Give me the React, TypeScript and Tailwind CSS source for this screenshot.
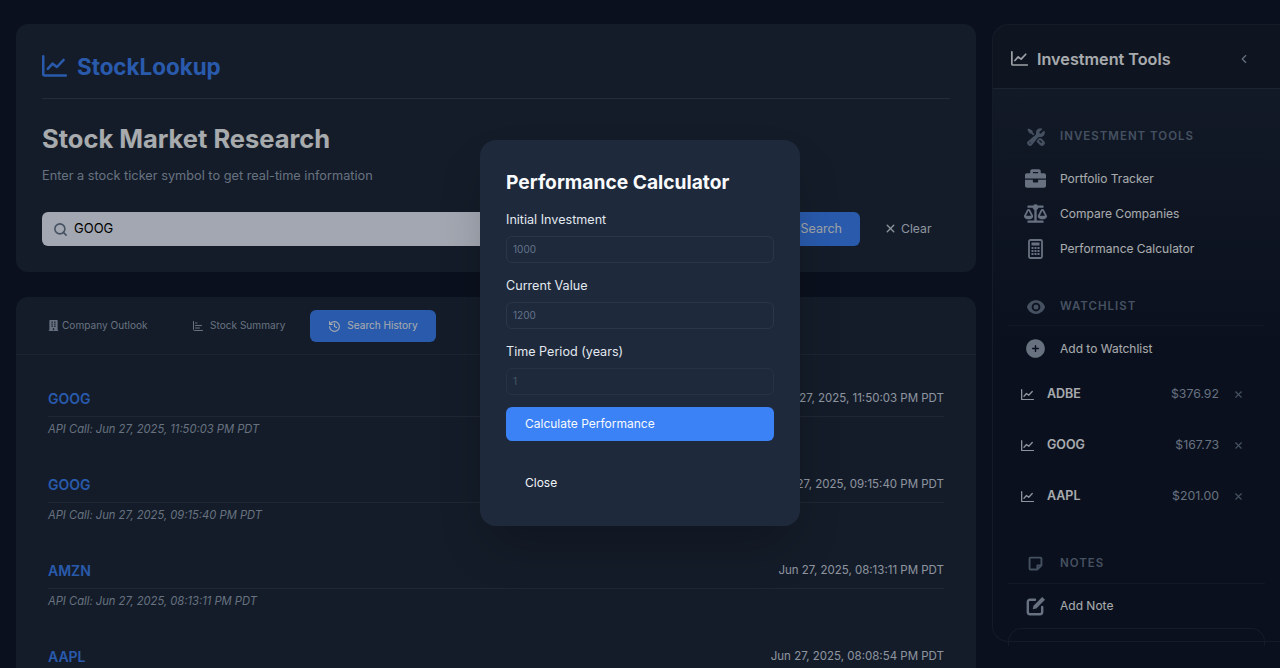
import React from "react";
import { ChevronLeft, ChartBar, History, Search, X } from "lucide-react";
import { HiWrenchScrewdriver, HiEye, HiPlusCircle } from "react-icons/hi2";
import { FaBuilding, FaBriefcase, FaBalanceScale } from "react-icons/fa";

const font = { fontFamily: "Inter, 'Liberation Sans', sans-serif" };

function ChartIcon({ w, className }: { w: number; className?: string }) {
  return (
    <svg width={w} height={(w * 23) / 26} viewBox="0 0 26 23" fill="none" stroke="currentColor" strokeWidth="2.6" strokeLinecap="round" strokeLinejoin="round" className={className}>
      <path d="M1.300 1.300v18.500a1.600 1.600 0 0 0 1.600 1.600h22" />
      <path d="M6 14.500l5-5.500 4.500 3.500L22.500 5" />
    </svg>
  );
}

function NoteIcon() {
  return (
    <svg width="15" height="15" viewBox="0 0 24 24" fill="none" stroke="currentColor" strokeWidth="3" strokeLinejoin="round">
      <path d="M4 2.500h16A1.500 1.500 0 0 1 21.500 4v11l-6.500 6.500H4A1.500 1.500 0 0 1 2.500 20V4A1.500 1.500 0 0 1 4 2.500z" />
      <path d="M15 21v-6h6" />
    </svg>
  );
}

function EditIcon() {
  return (
    <svg width="20" height="20" viewBox="0 0 20 20" fill="none">
      <path d="M9 3.800H4a2.200 2.200 0 0 0-2.200 2.200v10A2.200 2.200 0 0 0 4 18.200h10a2.200 2.200 0 0 0 2.200-2.200v-5" stroke="currentColor" strokeWidth="2.400" strokeLinecap="round" />
      <path d="M16.200 1l2.800 2.800-8.700 8.700-3.600.8.800-3.600z" fill="currentColor" />
    </svg>
  );
}

function CalcIcon() {
  return (
    <svg width="15" height="20" viewBox="0 0 15 20" fill="none">
      <rect x="1" y="1" width="13" height="18" rx="1.500" stroke="currentColor" strokeWidth="1.800" />
      <rect x="3.500" y="3.500" width="8" height="3" fill="currentColor" />
      <g fill="currentColor">
        <rect x="3.500" y="8" width="2" height="2" /><rect x="6.500" y="8" width="2" height="2" /><rect x="9.500" y="8" width="2" height="2" />
        <rect x="3.500" y="11" width="2" height="2" /><rect x="6.500" y="11" width="2" height="2" /><rect x="9.500" y="11" width="2" height="2" />
        <rect x="3.500" y="14" width="2" height="2" /><rect x="6.500" y="14" width="2" height="2" /><rect x="9.500" y="14" width="2" height="2" />
      </g>
    </svg>
  );
}

function HistoryRow({ sym, time, api = true }: { sym: string; time: string; api?: boolean }) {
  return (
    <div className="mb-[29px]">
      <div className="flex h-[36px] items-center justify-between border-b border-[#2d3849]">
        <span className="text-[14px] font-semibold text-[#3b82f6]">{sym}</span>
        <span className="mt-[1px] text-[11.500px] text-[#cbd5e1]">{time}</span>
      </div>
      {api && <div className="mt-[3px] text-[11.200px] italic leading-[18px] text-[#94a3b8]">API Call: {time}</div>}
    </div>
  );
}

function ToolItem({ icon, label }: { icon: React.ReactNode; label: string }) {
  return (
    <div className="flex h-[35px] items-center">
      <span className="flex w-[52px] justify-center pl-[3px] text-[#94a3b8]">{icon}</span>
      <span className="text-[12px] text-[#f1f5f9]">{label}</span>
    </div>
  );
}

function SectionHead({ icon, label, className }: { icon: React.ReactNode; label: string; className?: string }) {
  return (
    <div className={"flex h-[40px] items-center border-b border-[#1a2435] " + (className ?? "")}>
      <span className="flex w-[52px] justify-center pl-[3px] text-[#64748b]">{icon}</span>
      <span className="text-[11.500px] font-semibold tracking-[1px] text-[#64748b]">{label}</span>
    </div>
  );
}

function WatchRow({ sym, price }: { sym: string; price: string }) {
  return (
    <div className="flex h-[51px] items-center pl-[13px]">
      <ChartIcon w={13} className="text-[#cbd5e1]" />
      <span className="ml-[13px] flex-1 text-[12.500px] font-semibold text-[#f1f5f9]">{sym}</span>
      <span className="text-[12.300px] text-[#94a3b8]">{price}</span>
      <X size={11} strokeWidth={2.5} className="ml-[14px] mr-[21px] text-[#64748b]" />
    </div>
  );
}

export default function App() {
  return (
    <div style={font} className="relative flex h-[668px] gap-[16px] overflow-hidden bg-[#0f172a] pl-[16px] pt-[24px]">
      <main className="flex w-[960px] shrink-0 flex-col gap-[25px]">
        <section className="h-[248px] shrink-0 rounded-[12px] bg-[#1e293b] px-[26px]">
          <div className="flex h-[75px] items-center gap-[10px] border-b border-[#374151] pt-[14px] pb-[3px]">
            <ChartIcon w={25} className="text-[#3b82f6]" />
            <span className="text-[22.400px] font-bold text-[#3b82f6]">StockLookup</span>
          </div>
          <h1 className="mt-[24px] text-[25.500px] font-bold leading-[32px] text-[#f1f5f9]">Stock Market Research</h1>
          <p className="mt-[11px] text-[12.750px] leading-[20px] text-[#94a3b8]">Enter a stock ticker symbol to get real-time information</p>
          <div className="mt-[26px] flex items-center">
            <div className="flex h-[34px] w-[680px] items-center rounded-l-[6px] bg-[#e8f0fe] pl-[11px]">
              <Search size={15} strokeWidth={2.5} className="text-[#64748b]" />
              <span className="ml-[6px] text-[13px] text-black">GOOG</span>
            </div>
            <div className="flex h-[34px] w-[138px] items-center justify-end rounded-r-[6px] bg-[#3b82f6] pr-[18px] text-[12.500px] text-[#e2e8f0]">Search</div>
            <div className="ml-[24px] flex items-center gap-[4px] text-[12.200px] text-[#cbd5e1]">
              <X size={13} strokeWidth={2.5} />
              Clear
            </div>
          </div>
        </section>
        <section className="flex-1 rounded-t-[12px] bg-[#1e293b]">
          <div className="flex h-[58px] items-center border-b border-[#273448] pl-[32px] pt-[1px] text-[10.100px]">
            <div className="flex w-[144px] items-center gap-[3px] text-[#94a3b8]">
              <FaBuilding size={11} />
              Company Outlook
            </div>
            <div className="flex w-[118px] items-center gap-[6px] text-[#94a3b8]">
              <ChartBar size={12} />
              Stock Summary
            </div>
            <div className="flex h-[32px] w-[126px] items-center justify-center gap-[6px] rounded-[6px] bg-[#3b82f6] text-[#f1f5f9]">
              <History size={13} />
              Search History
            </div>
          </div>
          <div className="px-[32px] pt-[26px]">
            <HistoryRow sym="GOOG" time="Jun 27, 2025, 11:50:03 PM PDT" />
            <HistoryRow sym="GOOG" time="Jun 27, 2025, 09:15:40 PM PDT" />
            <HistoryRow sym="AMZN" time="Jun 27, 2025, 08:13:11 PM PDT" />
            <HistoryRow sym="AAPL" time="Jun 27, 2025, 08:08:54 PM PDT" api={false} />
          </div>
        </section>
      </main>
      <aside className="h-[618px] w-[288px] shrink-0 rounded-l-[16px] border border-r-0 border-[#1e293b] bg-linear-to-b from-[#1e293b] to-[#0f172a] to-55%">
        <div className="flex h-[64px] items-center rounded-tl-[16px] border-b border-[#273448] bg-[#151e2f] pl-[18px] pt-[5px]">
          <ChartIcon w={17} className="text-[#e2e8f0]" />
          <span className="ml-[9px] text-[16.200px] font-semibold text-[#f1f5f9]">Investment Tools</span>
          <ChevronLeft size={14} className="ml-auto mr-[29px] text-[#94a3b8]" />
        </div>
        <div className="px-[15px] pt-[27px]">
          <SectionHead className="pt-[2px]" icon={<HiWrenchScrewdriver size={20} />} label="INVESTMENT TOOLS" />
          <div className="mt-[5px]">
            <ToolItem icon={<FaBriefcase size={21} />} label="Portfolio Tracker" />
            <ToolItem icon={<FaBalanceScale size={23} />} label="Compare Companies" />
            <ToolItem icon={<CalcIcon />} label="Performance Calculator" />
          </div>
          <div className="mt-[20px]">
            <SectionHead className="pt-[2px]" icon={<HiEye size={20} />} label="WATCHLIST" />
          </div>
          <div className="mt-[5px]">
            <ToolItem icon={<HiPlusCircle size={23} />} label="Add to Watchlist" />
          </div>
          <div className="mt-[3px]">
            <WatchRow sym="ADBE" price="$376.92" />
            <WatchRow sym="GOOG" price="$167.73" />
            <WatchRow sym="AAPL" price="$201.00" />
          </div>
          <div className="mt-[22px]">
            <SectionHead icon={<NoteIcon />} label="NOTES" />
          </div>
          <div className="mt-[4px]">
            <ToolItem icon={<EditIcon />} label="Add Note" />
          </div>
          <div className="mt-[5px] h-[18px] rounded-t-[14px] border border-b-0 border-[#1e293b]" />
        </div>
      </aside>
      <div className="absolute inset-0 bg-black/30" />
      <div className="absolute left-[480px] top-[140px] w-[320px] rounded-[16px] bg-[#1e293b] px-[26px] pt-[29px] shadow-2xl">
        <h2 className="text-[19.200px] font-bold leading-[26px] text-[#f8fafc]">Performance Calculator</h2>
        <label className="mt-[15px] block text-[12.600px] leading-[20px] text-[#e2e8f0]">Initial Investment</label>
        <div className="mt-[6px] flex h-[27px] items-center rounded-[6px] border border-[#2a374b] pl-[6px] text-[10px] text-[#64748b]">1000</div>
        <label className="mt-[13px] block text-[12.600px] leading-[20px] text-[#e2e8f0]">Current Value</label>
        <div className="mt-[6px] flex h-[27px] items-center rounded-[6px] border border-[#2a374b] pl-[6px] text-[10px] text-[#64748b]">1200</div>
        <label className="mt-[13px] block text-[12.600px] leading-[20px] text-[#e2e8f0]">Time Period (years)</label>
        <div className="mt-[6px] flex h-[27px] items-center rounded-[6px] border border-[#263347] pl-[6px] text-[10px] text-[#475569]">1</div>
        <div className="mt-[12px] flex h-[34px] items-center rounded-[6px] bg-[#3b82f6] pl-[19px] text-[12px] text-[#f8fafc]">Calculate Performance</div>
        <div className="mt-[8px] flex h-[68px] items-center pl-[19px] text-[12px] text-[#f1f5f9]">Close</div>
        <div className="h-[9px]" />
      </div>
    </div>
  );
}
